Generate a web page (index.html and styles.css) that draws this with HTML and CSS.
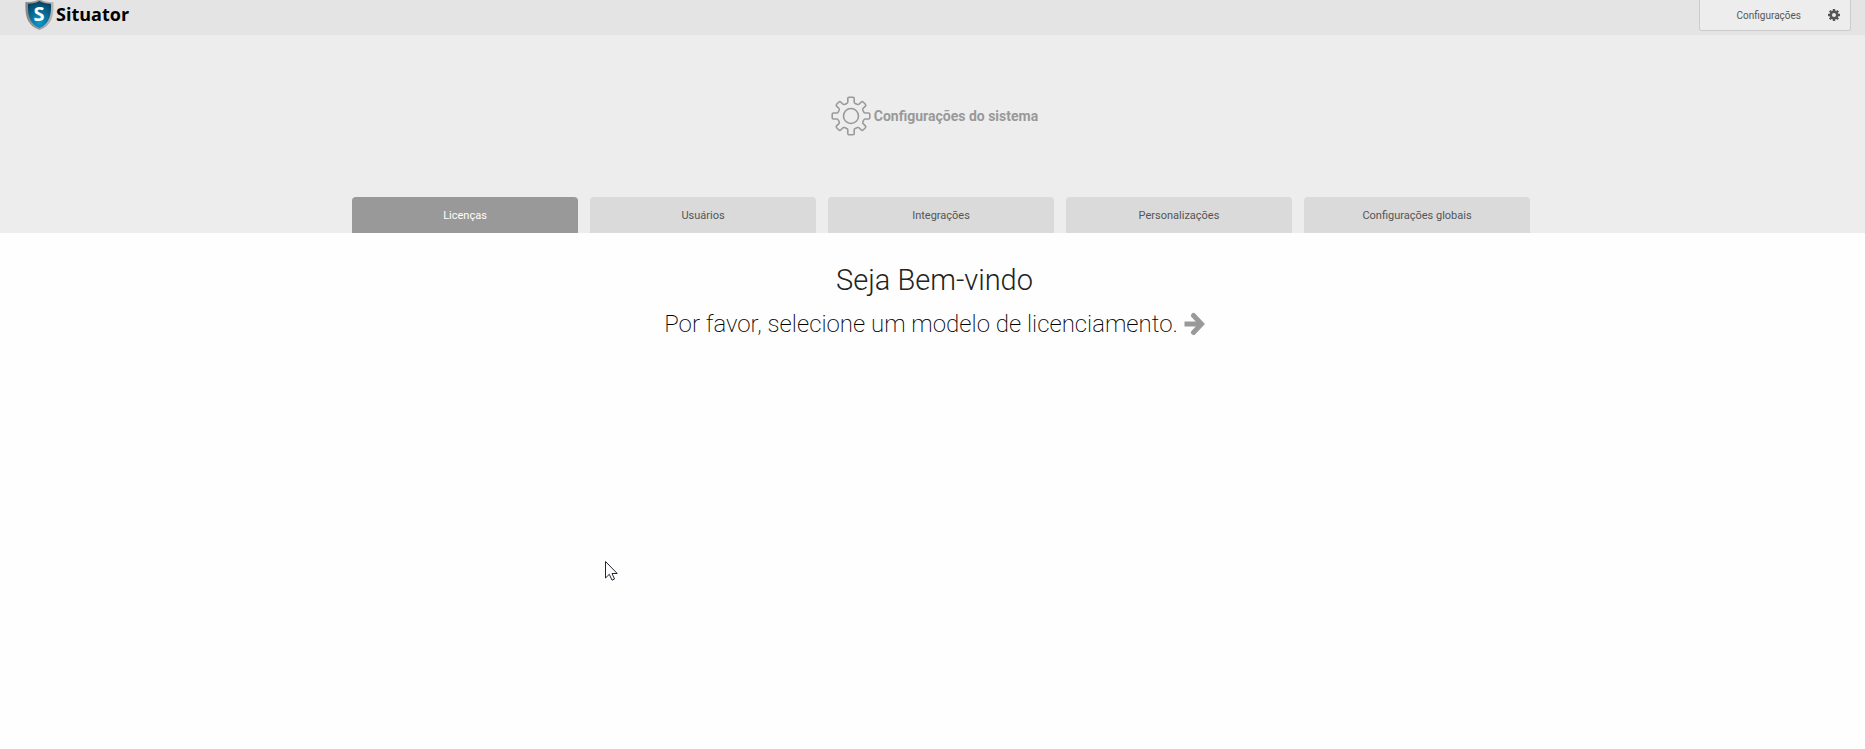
FILE: index.html
```html
<!DOCTYPE html>
<html lang="pt-BR">
<head>
  <meta charset="UTF-8">
  <meta name="viewport" content="width=device-width, initial-scale=1.0">
  <title>Situator - Configurações do sistema</title>
  <link rel="stylesheet" href="styles.css">
</head>
<body>
  <header class="topbar">
    <a href="#" class="brand">
      <svg class="brand-shield" width="29" height="30" viewBox="0 1 29 30" aria-hidden="true">
        <defs>
          <radialGradient id="shieldFill" cx="50%" cy="80%" r="80%">
            <stop offset="0" stop-color="#0a9bd0"/>
            <stop offset="1" stop-color="#07415f"/>
          </radialGradient>
          <linearGradient id="shieldEdge" x1="0" x2="1" y1="0" y2="0">
            <stop offset="0" stop-color="#858585"/>
            <stop offset="1" stop-color="#b8b8b8"/>
          </linearGradient>
        </defs>
        <path d="M14.500 0C10.500 2.500 5.500 3.500 0.500 3C0 15 1 26 14.500 31C28 26 29 15 28.500 3C23.500 3.500 18.500 2.500 14.500 0Z" fill="url(#shieldEdge)"/>
        <path d="M14.500 2C11 4 7 4.800 3 4.700C2.600 15 4 24.500 14.500 29C25 24.500 26.400 15 26 4.700C22 4.800 18 4 14.500 2Z" fill="url(#shieldFill)"/>
        <text class="brand-letter" x="14" y="22" text-anchor="middle">S</text>
      </svg>
      <span>Situator</span>
    </a>
    <button type="button" class="menu-button">
      <span class="menu-label">Configurações</span>
      <svg width="12" height="12" viewBox="0 0 12 12" aria-hidden="true">
        <g fill="#555">
          <path d="M4.800 0H7.200V12H4.800Z"/>
          <path d="M4.800 0H7.200V12H4.800Z" transform="rotate(45 6 6)"/>
          <path d="M4.800 0H7.200V12H4.800Z" transform="rotate(90 6 6)"/>
          <path d="M4.800 0H7.200V12H4.800Z" transform="rotate(135 6 6)"/>
          <circle cx="6" cy="6" r="4.500"/>
        </g>
        <circle cx="6" cy="6" r="2" fill="#ececec"/>
      </svg>
    </button>
  </header>

  <section class="hero">
    <h1>
      <svg width="40" height="40" viewBox="0 0 40 40" fill="none" stroke="#999" stroke-width="1.600" stroke-linejoin="round" aria-hidden="true">
        <path d="M18 1.200H22Q23.200 1.200 23.200 2.500V6Q23.200 7 24.200 7.400L26.500 8.400Q27.500 8.800 28.300 8L30.300 6Q31.200 5.200 32.100 6L34.400 8.300Q35.200 9.200 34.400 10.100L32.200 12.300Q31.400 13 31.800 14L32.700 16Q33.100 17 34.200 17H37.500Q38.800 17 38.800 18.200V21.800Q38.800 23 37.500 23H34.200Q33.100 23 32.700 24L31.800 26Q31.400 27 32.200 27.700L34.400 29.900Q35.200 30.800 34.400 31.700L32.100 34Q31.200 34.800 30.300 34L28.300 32Q27.500 31.200 26.500 31.600L24.200 32.600Q23.200 33 23.200 34V37.500Q23.200 38.800 22 38.800H18Q16.800 38.800 16.800 37.500V34Q16.800 33 15.800 32.600L13.500 31.600Q12.500 31.200 11.700 32L9.700 34Q8.800 34.800 7.900 34L5.600 31.700Q4.800 30.800 5.600 29.900L7.800 27.700Q8.600 27 8.200 26L7.300 24Q6.900 23 5.800 23H2.500Q1.200 23 1.200 21.800V18.200Q1.200 17 2.500 17H5.800Q6.900 17 7.300 16L8.200 14Q8.600 13 7.800 12.300L5.600 10.100Q4.800 9.200 5.600 8.300L7.900 6Q8.800 5.200 9.700 6L11.700 8Q12.500 8.800 13.500 8.400L15.800 7.400Q16.800 7 16.800 6V2.500Q16.800 1.200 18 1.200Z"/>
        <circle cx="20" cy="20" r="7.500"/>
      </svg>
      <span>Configurações do sistema</span>
    </h1>
    <nav class="tabs">
      <a href="#" class="tab active" aria-current="page">Licenças</a>
      <a href="#" class="tab">Usuários</a>
      <a href="#" class="tab">Integrações</a>
      <a href="#" class="tab">Personalizações</a>
      <a href="#" class="tab">Configurações globais</a>
    </nav>
  </section>

  <main class="welcome">
    <h2>Seja Bem-vindo</h2>
    <p>
      Por favor, selecione um modelo de licenciamento.
      <svg width="21" height="24" viewBox="0 0 21 24" fill="none" stroke="#999" stroke-width="5" aria-hidden="true">
        <path d="M0.500 12H17"/>
        <path d="M9.500 3.500L17.500 12L9.500 20.500" stroke-linecap="round"/>
      </svg>
    </p>
  </main>

  <!-- mouse pointer -->
  <svg class="pointer" width="13" height="20" viewBox="0 0 13 20" aria-hidden="true">
    <path d="M0.500 0.500V17L4.300 13.300L7 19.200L9.500 18L7 12.500H12.200Z" fill="#fff" stroke="#223" stroke-width="1"/>
  </svg>
</body>
</html>
```
FILE: styles.css
```css
* {
  box-sizing: border-box;
}

body {
  font-family: Roboto, "Liberation Sans", sans-serif;
  background-color: #fefefe;
  color: #222;
  margin: 0;
  min-height: 100vh;
  position: relative;
}

.topbar {
  display: flex;
  justify-content: space-between;
  align-items: flex-start;
  height: 35px;
  padding: 0 14px 0 25px;
  background-color: #e4e4e4;
}

.brand {
  display: flex;
  gap: 2px;
  font-family: "Open Sans", "Noto Sans", sans-serif;
  font-size: 18px;
  font-weight: 700;
  line-height: 28px;
  color: #000;
  text-decoration: none;
}

.brand-letter {
  font-family: "Open Sans", sans-serif;
  font-size: 20px;
  font-weight: 700;
  fill: #fff;
}

.menu-button {
  display: flex;
  align-items: center;
  justify-content: flex-end;
  gap: 27px;
  width: 152px;
  height: 31px;
  padding: 0 10px;
  font-family: inherit;
  font-size: 10px;
  color: #555;
  background-color: #ededed;
  border: 1px solid #ccc;
  border-top: 0;
  border-radius: 0 0 3px 3px;
  cursor: pointer;
}

.hero {
  background-color: #ededed;
}

h1 {
  display: flex;
  align-items: center;
  justify-content: center;
  gap: 3px;
  height: 162px;
  margin: 0;
  padding-left: 4px;
  font-size: 14px;
  font-weight: 700;
  color: #999;
}

.tabs {
  display: flex;
  justify-content: center;
  gap: 12px;
  padding-left: 17px;
}

.tab {
  flex: 0 1 226px;
  height: 36px;
  font-size: 11px;
  line-height: 37px;
  text-align: center;
  text-decoration: none;
  color: #555;
  background-color: #dadada;
  border-radius: 4px 4px 0 0;
}

.tab.active {
  color: #fff;
  background-color: #999;
}

.welcome {
  padding: 27px 0 0 4px;
  text-align: center;
}

h2 {
  margin: 0;
  font-size: 29px;
  font-weight: 300;
  line-height: 40px;
}

p {
  display: flex;
  align-items: center;
  justify-content: center;
  gap: 6px;
  margin: 5px 0 0;
  font-size: 24px;
  font-weight: 200;
  line-height: 38px;
  color: #000;
}

.pointer {
  position: absolute;
  left: 605px;
  top: 561px;
}
```
